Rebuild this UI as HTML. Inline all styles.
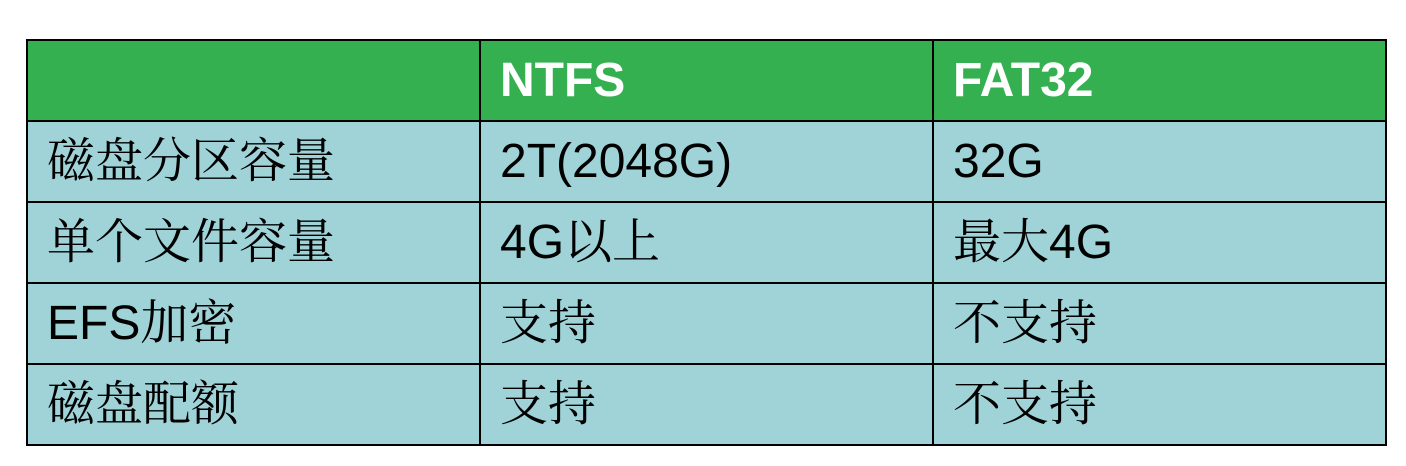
<!DOCTYPE html>
<html><head><meta charset="utf-8"><style>
html,body{margin:0;padding:0;background:#fff;width:1406px;height:466px;overflow:hidden}
table{position:absolute;left:26px;top:39px;border-collapse:collapse;table-layout:fixed}
td{border:2px solid #000;height:77px;padding:0 0 0 19px;font-family:"Liberation Sans","Noto Serif CJK SC",serif;font-size:48px;color:#000;background:#9fd3d8;vertical-align:middle;line-height:1;box-sizing:border-box}
tr.h td{background:#34b050;color:#fff;font-weight:bold;font-size:48px}
</style></head><body>
<table>
<colgroup><col style="width:453px"><col style="width:453px"><col style="width:453px"></colgroup>
<tr class="h" style="height:81px"><td></td><td>NTFS</td><td>FAT32</td></tr>
<tr style="height:81px"><td>磁盘分区容量</td><td>2T(2048G)</td><td>32G</td></tr>
<tr style="height:81px"><td>单个文件容量</td><td>4G以上</td><td>最大4G</td></tr>
<tr style="height:81px"><td>EFS加密</td><td>支持</td><td>不支持</td></tr>
<tr style="height:81px"><td>磁盘配额</td><td>支持</td><td>不支持</td></tr>
</table>
</body></html>
